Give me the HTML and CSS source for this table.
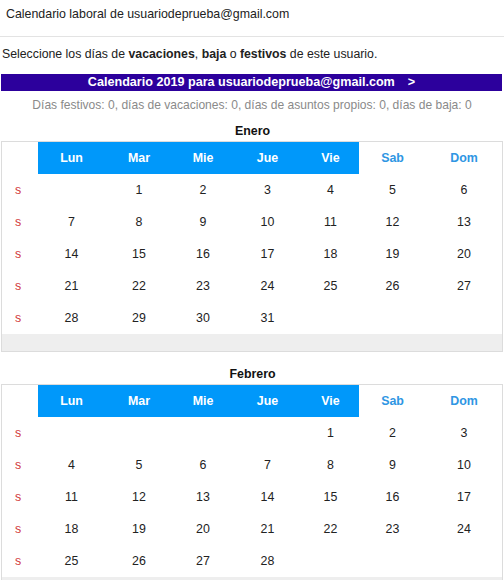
FILE: index.html
```html
<!DOCTYPE html>
<html lang="es">
<head>
<meta charset="utf-8">
<link rel="stylesheet" href="styles.css">
</head>
<body>
<div class="top">Calendario laboral de usuariodeprueba@gmail.com</div>
<p class="intro">Seleccione los días de <b>vacaciones</b>, <b>baja</b> o <b>festivos</b> de este usuario.</p>
<div class="bar">Calendario 2019 para usuariodeprueba@gmail.com<span class="next">&gt;</span></div>
<div class="summary">Días festivos: 0, días de vacaciones: 0, días de asuntos propios: 0, días de baja: 0</div>

<div class="month">
  <div class="mname">Enero</div>
  <div class="cal">
    <div class="c"></div><div class="c h">Lun</div><div class="c h">Mar</div><div class="c h">Mie</div><div class="c h">Jue</div><div class="c h">Vie</div><div class="c we">Sab</div><div class="c we">Dom</div>
    <div class="c s">s</div><div class="c"></div><div class="c">1</div><div class="c">2</div><div class="c">3</div><div class="c">4</div><div class="c">5</div><div class="c">6</div>
    <div class="c s">s</div><div class="c">7</div><div class="c">8</div><div class="c">9</div><div class="c">10</div><div class="c">11</div><div class="c">12</div><div class="c">13</div>
    <div class="c s">s</div><div class="c">14</div><div class="c">15</div><div class="c">16</div><div class="c">17</div><div class="c">18</div><div class="c">19</div><div class="c">20</div>
    <div class="c s">s</div><div class="c">21</div><div class="c">22</div><div class="c">23</div><div class="c">24</div><div class="c">25</div><div class="c">26</div><div class="c">27</div>
    <div class="c s">s</div><div class="c">28</div><div class="c">29</div><div class="c">30</div><div class="c">31</div><div class="c"></div><div class="c"></div><div class="c"></div>
    <div class="foot"></div>
  </div>
</div>

<div class="month">
  <div class="mname">Febrero</div>
  <div class="cal">
    <div class="c"></div><div class="c h">Lun</div><div class="c h">Mar</div><div class="c h">Mie</div><div class="c h">Jue</div><div class="c h">Vie</div><div class="c we">Sab</div><div class="c we">Dom</div>
    <div class="c s">s</div><div class="c"></div><div class="c"></div><div class="c"></div><div class="c"></div><div class="c">1</div><div class="c">2</div><div class="c">3</div>
    <div class="c s">s</div><div class="c">4</div><div class="c">5</div><div class="c">6</div><div class="c">7</div><div class="c">8</div><div class="c">9</div><div class="c">10</div>
    <div class="c s">s</div><div class="c">11</div><div class="c">12</div><div class="c">13</div><div class="c">14</div><div class="c">15</div><div class="c">16</div><div class="c">17</div>
    <div class="c s">s</div><div class="c">18</div><div class="c">19</div><div class="c">20</div><div class="c">21</div><div class="c">22</div><div class="c">23</div><div class="c">24</div>
    <div class="c s">s</div><div class="c">25</div><div class="c">26</div><div class="c">27</div><div class="c">28</div><div class="c"></div><div class="c"></div><div class="c"></div>
    <div class="foot"></div>
  </div>
</div>
</body>
</html>
```

FILE: styles.css
```css
html, body {
  margin: 0;
  padding: 0;
  background: #fff;
}
body {
  font-family: "Liberation Sans", Arial, sans-serif;
  font-size: 12.4px;
  line-height: 15px;
  color: #222;
}
.top {
  padding: 7px 6px 14px;
  border-bottom: 1px solid #e3e3e3;
}
.intro {
  margin: 10px 0 0 2px;
  font-size: 12.3px;
}
.intro b {
  font-weight: bold;
}
.bar {
  margin: 12px 2px 0 1px;
  height: 17px;
  line-height: 17px;
  background: #2c009c;
  color: #fff;
  font-weight: bold;
  font-size: 12.6px;
  text-align: center;
}
.next {
  margin-left: 13px;
}
.summary {
  margin-top: 7px;
  text-align: center;
  color: #8a8a8a;
  font-size: 12.05px;
}
.month {
  margin: 11px 0 0 1px;
}
.month + .month {
  margin-top: 15px;
}
.mname {
  text-align: center;
  font-weight: bold;
  color: #111;
  margin-bottom: 2px;
}
.cal {
  width: 500px;
  border: 1px solid #dcdcdc;
  display: grid;
  grid-template-columns: 36px 67px 68px 60px 69px 57px 67px 76px;
  grid-template-rows: repeat(6, 32px) 17px;
}
.c {
  display: flex;
  align-items: center;
  justify-content: center;
}
.h {
  background: #0098fa;
  color: #fff;
  font-weight: bold;
}
.we {
  color: #2f96e3;
  font-weight: bold;
}
.s {
  color: #d23a3a;
  padding-right: 4px;
}
.foot {
  grid-column: 1 / -1;
  background: #eeeeee;
}
```
